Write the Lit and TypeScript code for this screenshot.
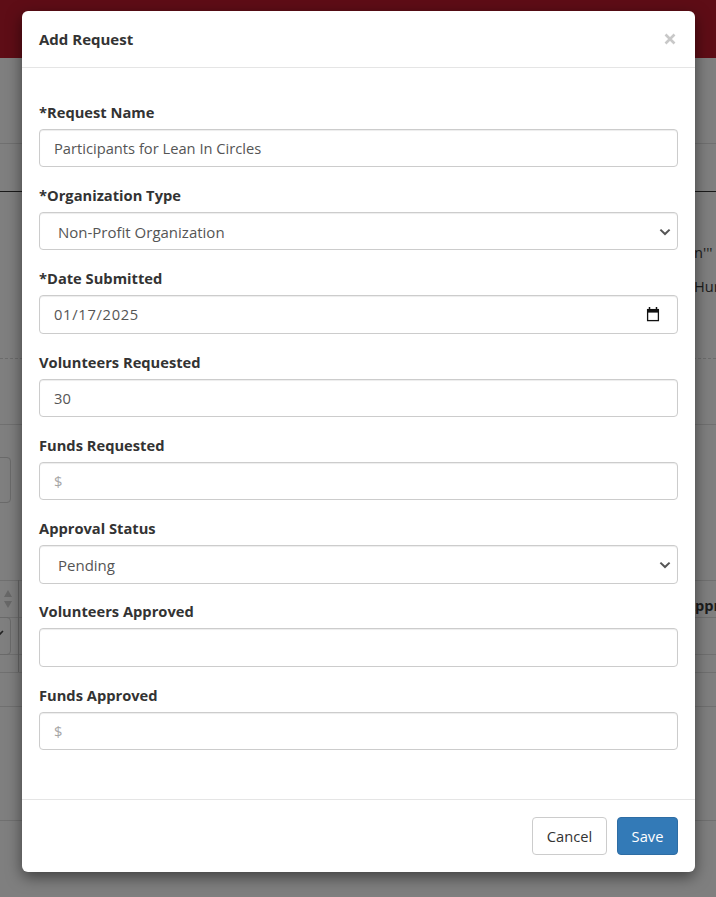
import { LitElement, html, css } from "lit";
import { customElement } from "lit/decorators.js";

const chevron = html`<svg class="chev" width="12" height="8" viewBox="0 0 12 8"><path d="M1.4 1.6 6 6l4.6-4.4" fill="none" stroke="#555" stroke-width="2"/></svg>`;

@customElement("app-root")
export class AppRoot extends LitElement {
  static styles = css`
    :host {
      display: block;
      width: 716px;
      height: 897px;
      overflow: hidden;
      position: relative;
      background: #7f7f7f;
      font-family: "Open Sans", "Noto Sans", sans-serif;
      color: #212529;
    }
    .bg {
      position: absolute;
      inset: 0;
    }
    .bg > * { position: absolute; }
    .banner { left: 0; top: 0; width: 716px; height: 58px; background: #5e0d16; }
    .line { left: 0; width: 716px; height: 1px; background: #707070; }
    .dark { background: #1a1a1a; }
    .dash { left: 0; width: 716px; height: 0; border-top: 1px dashed #6c6c6c; }
    .vline { left: 18px; top: 580px; width: 1px; height: 92px; background: #666; }
    .sort { left: 3px; top: 590px; }
    .tick { left: -4px; top: 630px; }
    .bgtext { font-size: 14.6px; color: #1c1c1c; white-space: nowrap; }
    .bgbold { font-weight: 700; }
    .bgbox { border: 1px solid #6a6a6a; border-radius: 4px; box-sizing: border-box; }
    .modal {
      position: absolute;
      left: 22px;
      top: 11px;
      width: 673px;
      height: 861px;
      background: #fff;
      border-radius: 6px;
      box-shadow: 0 5px 15px rgba(0, 0, 0, 0.5);
      display: flex;
      flex-direction: column;
      box-sizing: border-box;
    }
    .head {
      height: 57px;
      box-sizing: border-box;
      border-bottom: 1px solid #e5e5e5;
      padding: 0 17px;
      display: flex;
      align-items: center;
      justify-content: space-between;
    }
    .title { font-size: 15px; font-weight: 700; color: #333; }
    .close { color: #c8c8c8; display: flex; margin-right: 2px; }
    .body {
      flex: 1;
      padding: 33.625px 17px 0;
      display: flex;
      flex-direction: column;
    }
    .group { height: 83.3px; flex: none; }
    label { display: block; font-size: 14.7px; font-weight: 700; color: #333; line-height: 20px; margin-bottom: 7px; }
    .ctl {
      height: 38.4px;
      box-sizing: border-box;
      border: 1px solid #ccc;
      border-radius: 4px;
      box-shadow: inset 0 1px 1px rgba(0, 0, 0, 0.075);
      padding: 0 14px;
      display: flex;
      align-items: center;
      justify-content: space-between;
      font-size: 14.7px;
      color: #555;
    }
    .sel { padding: 1px 6px 0 18px; font-size: 15px; }
    .date { letter-spacing: 0.7px; padding-right: 17px; }
    .ph { color: #a6a6a6; }
    .foot {
      height: 73px;
      box-sizing: border-box;
      border-top: 1px solid #e5e5e5;
      padding: 0 17px 0 0;
      display: flex;
      align-items: center;
      justify-content: flex-end;
      gap: 10px;
    }
    .btn {
      height: 38px;
      box-sizing: border-box;
      border-radius: 4px;
      font-size: 14.7px;
      display: flex;
      align-items: center;
      justify-content: center;
    }
    .cancel { width: 75px; border: 1px solid #ccc; color: #333; background: #fff; }
    .save { width: 61px; border: 1px solid #2e6da4; color: #fff; background: #337ab7; }
  `;

  render() {
    return html`
      <div class="bg">
        <div class="banner"></div>
        <div class="line" style="top:143px"></div>
        <div class="line dark" style="top:191px"></div>
        <div class="dash" style="top:358px"></div>
        <div class="line" style="top:424px"></div>
        <div class="line" style="top:580px"></div>
        <div class="line" style="top:617px"></div>
        <div class="line" style="top:654px"></div>
        <div class="line" style="top:672px"></div>
        <div class="line" style="top:706px"></div>
        <div class="line" style="top:820px"></div>
        <div class="vline"></div>
        <svg class="sort" width="10" height="18" viewBox="0 0 10 18"><path d="M5 0l4 7H1zM5 18l4-7H1z" fill="#686868"/></svg>
        <svg class="tick" width="8" height="6" viewBox="0 0 8 6"><path d="M1 1l3 3 3-3" fill="none" stroke="#222" stroke-width="1.6"/></svg>
        <div class="bgtext" style="left:694px;top:242px">n'''</div>
        <div class="bgtext" style="left:694px;top:276px">Hur</div>
        <div class="bgtext bgbold" style="left:685px;top:595px">Appr</div>
        <div class="bgbox" style="left:-8px;top:457px;width:19px;height:46px"></div>
        <div class="bgbox" style="left:-8px;top:617px;width:19px;height:38px"></div>
      </div>
      <div class="modal">
        <div class="head">
          <div class="title">Add Request</div>
          <span class="close"><svg width="12" height="12" viewBox="0 0 12 12"><path d="M1.5 1.5l9 9M10.5 1.5l-9 9" stroke="currentColor" stroke-width="2.6"/></svg></span>
        </div>
        <div class="body">
          <div class="group"><label>*Request Name</label><div class="ctl">Participants for Lean In Circles</div></div>
          <div class="group"><label>*Organization Type</label><div class="ctl sel">Non-Profit Organization ${chevron}</div></div>
          <div class="group"><label>*Date Submitted</label><div class="ctl date">01/17/2025
            <svg width="14" height="15" viewBox="0 0 14 15"><path d="M3.5 0v3M10.5 0v3" stroke="#111" stroke-width="1.5"/><rect x="1.6" y="2.6" width="10.8" height="11" fill="none" stroke="#111" stroke-width="1.3"/><rect x="1" y="2" width="12" height="3.6" fill="#111"/></svg>
          </div></div>
          <div class="group"><label>Volunteers Requested</label><div class="ctl">30</div></div>
          <div class="group"><label>Funds Requested</label><div class="ctl ph">$</div></div>
          <div class="group"><label>Approval Status</label><div class="ctl sel">Pending ${chevron}</div></div>
          <div class="group"><label>Volunteers Approved</label><div class="ctl"></div></div>
          <div class="group"><label>Funds Approved</label><div class="ctl ph">$</div></div>
        </div>
        <div class="foot">
          <div class="btn cancel">Cancel</div>
          <div class="btn save">Save</div>
        </div>
      </div>
    `;
  }
}
